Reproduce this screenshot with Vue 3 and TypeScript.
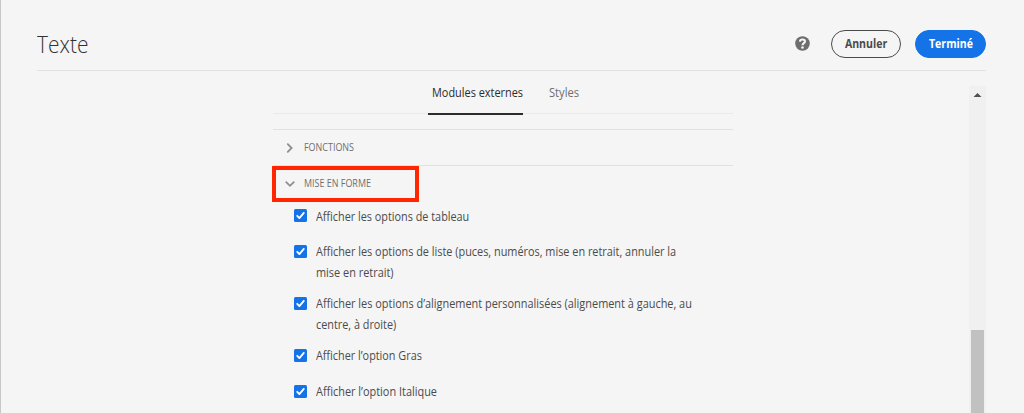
<script setup lang="ts">
interface Option {
  lines: { text: string; fit: string }[]
}

const options: Option[] = [
  { lines: [{ text: 'Afficher les options de tableau', fit: 'narrow' }] },
  {
    lines: [
      { text: 'Afficher les options de liste (puces, numéros, mise en retrait, annuler la', fit: 'regular' },
      { text: 'mise en retrait)', fit: 'wide' },
    ],
  },
  {
    lines: [
      { text: 'Afficher les options d’alignement personnalisées (alignement à gauche, au', fit: 'wide' },
      { text: 'centre, à droite)', fit: 'narrow' },
    ],
  },
  { lines: [{ text: 'Afficher l’option Gras', fit: 'narrow' }] },
  { lines: [{ text: 'Afficher l’option Italique', fit: 'wide' }] },
]
</script>

<template>
  <div class="dialog">
    <header class="header">
      <h1 class="title"><span>Texte</span></h1>
      <svg class="help" width="15" height="15" viewBox="0 0 15 15">
        <circle cx="7.5" cy="7.5" r="7.3" fill="#6e6e6e" />
        <path d="M4.9 5.6C5 4 6.2 3.5 7.5 3.5C9 3.5 10 4.2 10 5.4C10 7.1 7.5 7.1 7.5 9.2" fill="none" stroke="#f5f5f5" stroke-width="2.1" />
        <circle cx="7.5" cy="11.5" r="1.3" fill="#f5f5f5" />
      </svg>
      <button class="button cancel"><span>Annuler</span></button>
      <button class="button done"><span>Terminé</span></button>
    </header>
    <div class="body">
      <main class="content">
        <nav class="tabs">
          <a class="tab active"><span>Modules externes</span></a>
          <a class="tab"><span>Styles</span></a>
        </nav>
        <section class="section">
          <svg class="chevron" width="12" height="12" viewBox="0 0 12 12"><path d="M3.8 2.2L7.6 6L3.8 9.8" /></svg>
          <span>FONCTIONS</span>
        </section>
        <section class="section">
          <svg class="chevron" width="12" height="12" viewBox="0 0 12 12"><path d="M2.2 4.2L6 7.8L9.8 4.2" /></svg>
          <span>MISE EN FORME</span>
          <div class="highlight"></div>
        </section>
        <ul class="options">
          <li v-for="(option, i) in options" :key="i" class="option">
            <svg class="check" width="13" height="13" viewBox="0 0 13 13">
              <rect width="13" height="13" rx="1.5" fill="#1473e6" />
              <path d="M3.2 6.8L5.4 9.1L9.8 3.9" fill="none" stroke="#fff" stroke-width="1.8" stroke-linecap="round" stroke-linejoin="round" />
            </svg>
            <div class="label">
              <div v-for="line in option.lines" :key="line.text"><span :class="line.fit">{{ line.text }}</span></div>
            </div>
          </li>
        </ul>
      </main>
      <div class="scrollbar">
        <svg class="arrow" width="17" height="17" viewBox="0 0 17 17"><path d="M4.5 11L8.5 7L12.5 11Z" fill="#505050" /></svg>
        <div class="thumb"></div>
      </div>
    </div>
  </div>
</template>

<style>
body {
  margin: 0;
  background: #f5f5f5;
}
</style>

<style scoped>
.dialog {
  box-sizing: border-box;
  width: 1024px;
  height: 413px;
  overflow: hidden;
  border-left: 1px solid #c8c8c8;
  padding: 0 38px 0 36px;
  background: #f5f5f5;
  color: #4b4b4b;
  font-family: "Open Sans", "Noto Sans", sans-serif;
}
span {
  display: inline-block;
  transform-origin: left center;
}
.header {
  box-sizing: border-box;
  display: flex;
  align-items: center;
  height: 71px;
  padding-top: 17px;
  border-bottom: 1px solid #e1e1e1;
}
.title {
  flex: 1;
  margin: 0;
  color: #323232;
  font-size: 23px;
  font-weight: 300;
  line-height: 30px;
}
.title span {
  transform: scaleX(0.91);
}
.help {
  margin-right: 21px;
}
.button {
  box-sizing: border-box;
  display: flex;
  align-items: center;
  justify-content: center;
  height: 28px;
  padding: 0;
  border-radius: 14px;
  font: 700 12px/24px "Open Sans", "Noto Sans", sans-serif;
  white-space: nowrap;
}
.button span {
  transform: scaleX(0.88);
  transform-origin: center;
}
.cancel {
  width: 70px;
  margin-right: 14px;
  border: 1px solid #4b4b4b;
  background: transparent;
  color: #4b4b4b;
}
.done {
  width: 71px;
  border: 1px solid #1473e6;
  background: #1473e6;
  color: #fff;
}
.body {
  display: flex;
  justify-content: space-between;
  height: 342px;
}
.content {
  width: 460px;
  margin-left: 236px;
}
.tabs {
  box-sizing: border-box;
  display: flex;
  height: 43px;
  margin-bottom: 15px;
  padding-left: 155px;
  border-bottom: 1px solid #eaeaea;
}
.tab {
  box-sizing: border-box;
  height: 44px;
  padding: 10px 0 0 4px;
  color: #6e6e6e;
  font-size: 12px;
  line-height: 24px;
  white-space: nowrap;
}
.tab span {
  transform: scaleX(0.93);
}
.active {
  width: 95px;
  margin-right: 21.5px;
  border-bottom: 2px solid #2c2c2c;
  color: #2c2c2c;
}
.active span {
  transform: scaleX(0.91);
}
.section {
  position: relative;
  box-sizing: border-box;
  display: flex;
  align-items: center;
  height: 36px;
  padding-left: 11px;
  border-top: 1px solid #e1e1e1;
  color: #6e6e6e;
  font-size: 10px;
  white-space: nowrap;
}
.section span {
  padding-bottom: 1px;
  transform: scaleX(0.895);
}
.chevron {
  margin-right: 7.5px;
  fill: none;
  stroke: #8e8e8e;
  stroke-width: 1.8;
  stroke-linecap: round;
}
.highlight {
  position: absolute;
  box-sizing: border-box;
  top: 0;
  left: -1px;
  width: 147px;
  height: 36px;
  border: 4px solid #ff2600;
}
.options {
  margin: 5px 0 0;
  padding: 0 0 0 21px;
  list-style: none;
}
.option {
  box-sizing: border-box;
  display: flex;
  min-height: 36px;
  padding-bottom: 10px;
}
.check {
  flex: none;
  margin: 3px 9px 0 0;
}
.label {
  font-size: 12px;
  line-height: 21px;
  white-space: nowrap;
}
.option + .option .label {
  margin-top: -1px;
  margin-bottom: 1px;
}
.narrow {
  transform: scaleX(0.903);
}
.regular {
  transform: scaleX(0.907);
}
.wide {
  transform: scaleX(0.91);
}
.scrollbar {
  width: 17px;
  margin-top: 15px;
  background: #f0f0f0;
}
.arrow {
  display: block;
}
.thumb {
  width: 13px;
  height: 83px;
  margin: 227px auto 0;
  background: #c1c1c1;
}
</style>
